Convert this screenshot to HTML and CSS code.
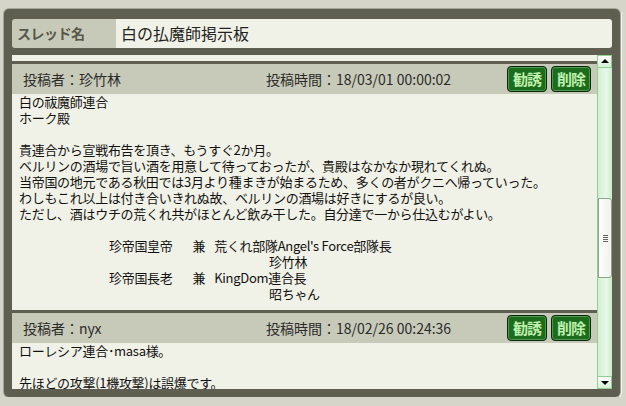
FILE: index.html
```html
<!DOCTYPE html>
<html>
  <head>
    <title>白の払魔師掲示板</title>
    <link rel="stylesheet" href="styles.css">
  </head>
  <body>
    <div class="panel">
      <div class="thread-row">
        <div class="thread-label">スレッド名</div>
        <div class="thread-name">白の払魔師掲示板</div>
      </div>
      <div class="scroll-area">
        <div class="posts">
          <div class="post-tail"></div>

          <div class="post">
            <div class="post-head">
              <span class="author">投稿者：珍竹林</span>
              <span class="time">投稿時間：18/03/01 00:00:02</span>
              <span class="actions">
                <button class="btn">勧誘</button>
                <button class="btn">削除</button>
              </span>
            </div>
            <div class="post-body">
              <div>白の祓魔師連合</div>
              <div>ホーク殿</div>
              <div>&nbsp;</div>
              <div>貴連合から宣戦布告を頂き、もうすぐ2か月。</div>
              <div>ベルリンの酒場で旨い酒を用意して待っておったが、貴殿はなかなか現れてくれぬ。</div>
              <div>当帝国の地元である秋田では3月より種まきが始まるため、多くの者がクニへ帰っていった。</div>
              <div>わしもこれ以上は付き合いきれぬ故、ベルリンの酒場は好きにするが良い。</div>
              <div>ただし、酒はウチの荒くれ共がほとんど飲み干した。自分達で一から仕込むがよい。</div>
              <div>&nbsp;</div>
              <div class="sign">珍帝国皇帝<span class="sp"></span>兼<span class="sp-s"></span>荒くれ部隊Angel's Force部隊長</div>
              <div class="sign-name">珍竹林</div>
              <div class="sign">珍帝国長老<span class="sp"></span>兼<span class="sp-s"></span>KingDom連合長</div>
              <div class="sign-name">昭ちゃん</div>
            </div>
          </div>

          <div class="post">
            <div class="post-head">
              <span class="author">投稿者：nyx</span>
              <span class="time">投稿時間：18/02/26 00:24:36</span>
              <span class="actions">
                <button class="btn">勧誘</button>
                <button class="btn">削除</button>
              </span>
            </div>
            <div class="post-body">
              <div>ローレシア連合･masa様。</div>
              <div>&nbsp;</div>
              <div>先ほどの攻撃(1機攻撃)は誤爆です。</div>
            </div>
          </div>
        </div>

        <div class="scrollbar">
          <div class="arrow arrow-up"></div>
          <div class="track">
            <div class="thumb"><span class="grip"></span></div>
          </div>
          <div class="arrow arrow-down"></div>
        </div>
      </div>
    </div>
  </body>
</html>
```

FILE: styles.css
```css
body {
  margin: 0;
  background-color: #d5d6c9;
  font-family: "Noto Sans CJK JP", "DejaVu Sans", sans-serif;
  color: #111;
}
.panel {
  box-sizing: border-box;
  width: 616px;
  height: 388px;
  margin: 9px 0 0 4px;
  padding: 10px 8px 8px 8px;
  background-color: #5e5f50;
  border-radius: 5px;
  box-shadow: 0 0 0 1px #a4a598, 1px 1px 0 1px #f4f4ee;
  display: flex;
  flex-direction: column;
  gap: 7px;
}
.thread-row {
  display: flex;
  height: 29px;
}
.thread-label {
  width: 104px;
  padding-left: 5px;
  box-sizing: border-box;
  background-color: #c8cab9;
  border-radius: 3px 0 0 3px;
  color: #55584a;
  font-size: 14px;
  font-weight: bold;
  letter-spacing: -0.5px;
  line-height: 29px;
}
.thread-name {
  flex: 1;
  padding-left: 5px;
  background-color: #f1f2e7;
  border-radius: 0 3px 3px 0;
  color: #222;
  font-size: 16px;
  line-height: 29px;
}
.scroll-area {
  display: flex;
  height: 334px;
  overflow: hidden;
}
.posts {
  flex: 1;
  display: flex;
  flex-direction: column;
  gap: 3px;
  overflow: hidden;
}
.post-tail {
  height: 6px;
  flex-shrink: 0;
  background-color: #f1f2e7;
}
.post {
  flex-shrink: 0;
}
.post-head {
  display: flex;
  align-items: center;
  height: 30px;
  padding: 0 6px 0 11px;
  background-color: #c8cab9;
  color: #2a2a2a;
  font-size: 14px;
}
.author {
  width: 243px;
}
.time {
  flex: 1;
}
.actions {
  display: flex;
  gap: 4px;
}
.btn {
  width: 40px;
  height: 26px;
  padding: 0;
  border: 1px solid #0b260b;
  border-radius: 4px;
  background-color: #1d6c1d;
  box-shadow: inset 0 0 0 1px #4f9a4f;
  color: #bff0ad;
  font-family: "Noto Sans CJK JP", sans-serif;
  font-size: 15px;
  font-weight: bold;
  line-height: 22px;
  letter-spacing: -1px;
  cursor: pointer;
}
.post-body {
  padding: 0 7px 8px 7px;
  background-color: #f1f2e7;
  font-size: 13px;
  line-height: 16px;
  letter-spacing: -0.3px;
  white-space: nowrap;
}
.sign {
  padding-left: 90px;
}
.sign-name {
  padding-left: 250px;
}
.sp {
  display: inline-block;
  width: 20px;
}
.sp-s {
  display: inline-block;
  width: 9px;
}
.scrollbar {
  width: 15px;
  display: flex;
  flex-direction: column;
}
.arrow {
  position: relative;
  height: 13px;
  box-sizing: border-box;
  border: 1px solid #8fcf8f;
  background: linear-gradient(to bottom, #ffffff, #d4f0d4);
}
.arrow::after {
  content: "";
  position: absolute;
  left: 3px;
  top: 3px;
  border-left: 4px solid transparent;
  border-right: 4px solid transparent;
}
.arrow-up::after {
  border-bottom: 4px solid #000;
}
.arrow-down::after {
  top: 4px;
  border-top: 4px solid #000;
}
.track {
  flex: 1;
  padding-top: 130px;
  box-sizing: border-box;
  border-left: 1px solid #8fcf8f;
  background: linear-gradient(to right, #d2efd2, #e8f8e8 60%, #cdeccd);
}
.thumb {
  height: 80px;
  box-sizing: border-box;
  border: 1px solid #8da58d;
  border-radius: 0 3px 3px 0;
  background: linear-gradient(to right, #ffffff, #f0f2ea);
  display: flex;
  align-items: center;
  justify-content: center;
}
.grip {
  width: 5px;
  height: 7px;
  background: repeating-linear-gradient(to bottom, #666 0, #666 1px, transparent 1px, transparent 2px);
}
```
